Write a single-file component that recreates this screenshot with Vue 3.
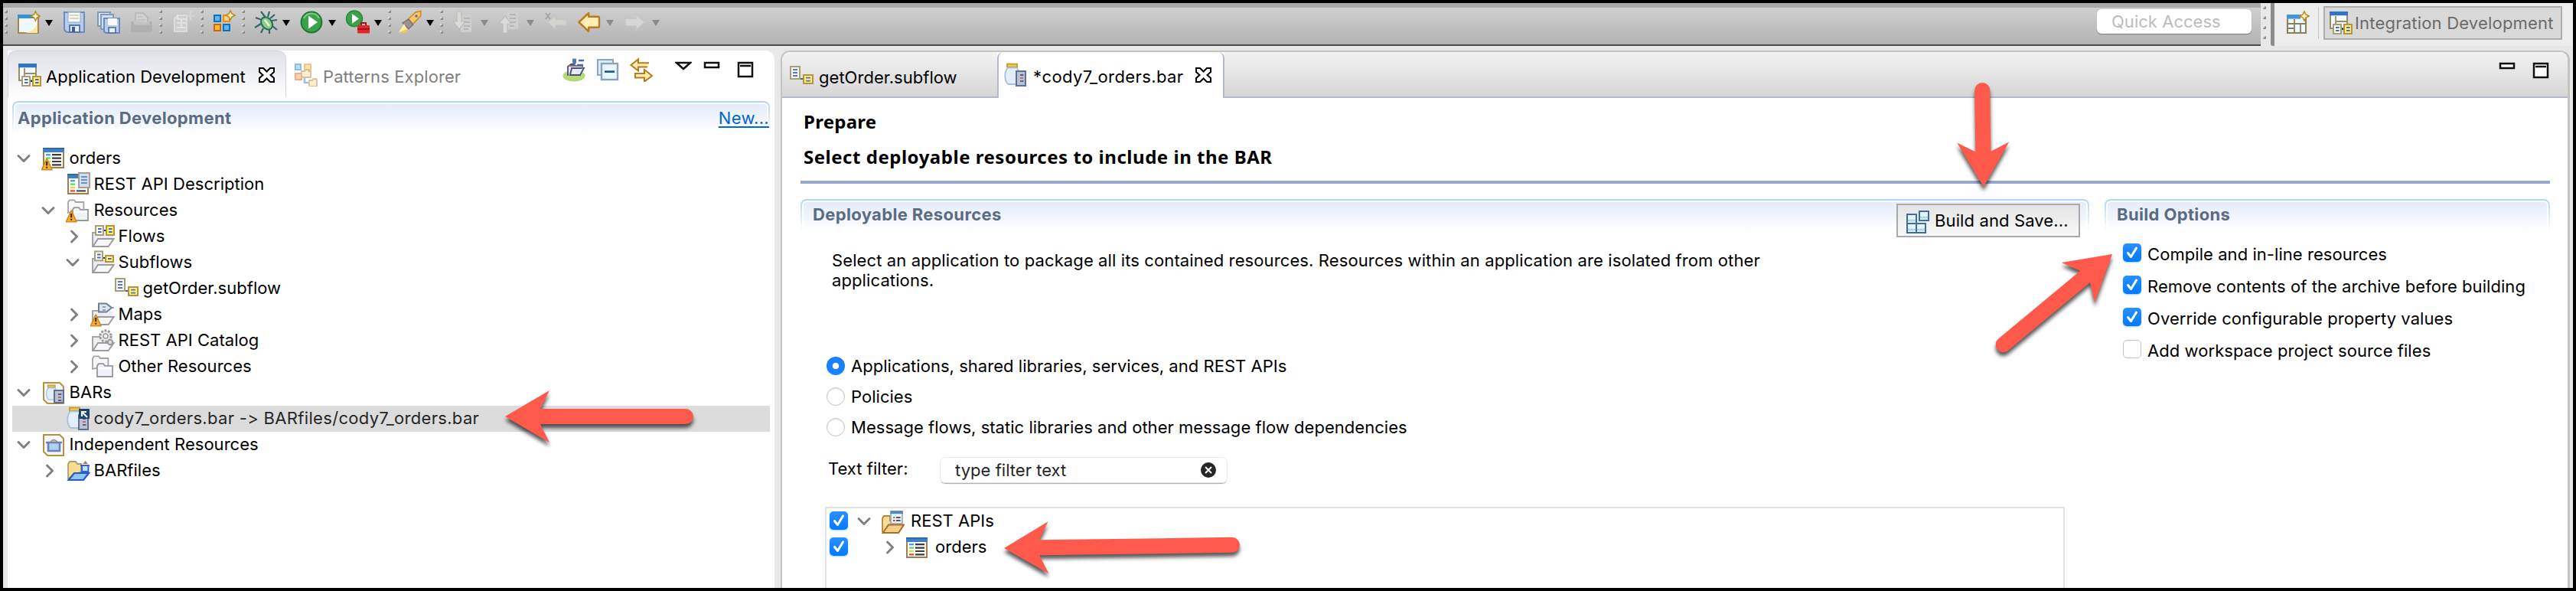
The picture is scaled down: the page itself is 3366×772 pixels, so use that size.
<script setup>
const star = (x, y) => `<path d="M${x} ${y - 3}l1 2 2 1-2 1-1 2-1-2-2-1 2-1z" fill="#fff3c8" stroke="#bb8a22" stroke-width=".8"/>`
const page = (x, y, h = 7) => `<rect x="${x + .5}" y="${y + .5}" width="6" height="${h + 1}" fill="#f4f6fc" stroke="#a99f76"/><path d="M${x + 2} ${y + 2.5}h3M${x + 2} ${y + 4.5}h3${h > 6 ? `M${x + 2} ${y + 6.5}h3` : ''}" stroke="#5b78b8" stroke-width=".9"/>`
const node = (x, y, h = 6) => `<rect x="${x + .5}" y="${y + .5}" width="6" height="${h - .5}" fill="#fdf17e" stroke="#b8923c"/><path d="M${x + 2} ${y + 2.3}h3M${x + 2} ${y + 4.3}h3" stroke="#5b6fa8" stroke-width=".9"/>`
const warn = '<path d="M3.600 8 7 15.400H.2z" fill="#f8ab2f" stroke="#d08a1e" stroke-width=".8" stroke-linejoin="round"/><path d="M3.600 10v2.600M3.600 13.400v1" stroke="#3a2500" stroke-width="1"/>'
const win = (c = '#3f7fc4') => `<rect x="1.500" y="1.500" width="13" height="12.500" fill="#fdfdfd" stroke="#a67c4b"/><rect x="1" y="1" width="14" height="3" fill="${c}"/><path d="M1 1.400h14" stroke="#2c62a5" stroke-width=".8"/>`
const lines = '<path d="M3 5.600h3" stroke="#2f8fff"/><path d="M3 7.800h3" stroke="#2fee3b"/><path d="M3 10h3" stroke="#ffd21f"/><path d="M3 12.200h3" stroke="#ff2a1a"/><path d="M7 5.600h6M7 7.800h6M7 10h6M7 12.200h6" stroke="#3b3b3b" stroke-width="1.100"/>'
const openFolder = '<path d="M1.500 14.500V5.500h6" fill="none" stroke="#a5a5a5"/><path d="M2 6h12.500v4L11 14H2z" fill="#eceef3"/><path d="M5 9.500h10.300L11.800 14.500H1.700z" fill="#f6f8fd" stroke="#9c9c9c"/>'
const folders = '<path d="M1.500 9.500V2.500l1-1.300h3l1 1.300h5.200v5z" fill="#f7f8fb" stroke="#a5a5a5" stroke-width=".9"/><path d="M4.500 14.500V7.300l1-1.200h3l1 1.300h5v7.100z" fill="#eff2f9" stroke="#999" stroke-width=".9"/><path d="M5 9h9" stroke="#fff" stroke-width=".9"/>'
const jar = () => '<rect x="2.500" y=".8" width="6.500" height="2" fill="#f2ce57" stroke="#c49a2a" stroke-width=".9"/><path d="M3.300 3.200h5.400c2.200 1.500 2.400 9 0 10.800H3.300C.4 12 .4 5 3.300 3.200z" fill="#e4eefa" stroke="#a8c0dd" stroke-width=".9"/>'
const server = (x, y, h = 9.5) => `<rect x="${x + .5}" y="${y + .5}" width="6" height="${h}" fill="#b7c2d6" stroke="#5e7191"/><path d="M${x + 3} ${y + 3}h2.200M${x + 3} ${y + 7}h2.200" stroke="#57617a"/><path d="M${x + 3} ${y + 5}h2" stroke="#c76a6a"/>`
const cardFrame = '<path d="M1.500 1.500h10.500l2.500 2.500v11H4l-2.500-2.500z" fill="#f4f7fd" stroke="#b39340"/>'
const flowPair = y => `<path d="M8.500 ${y + 3}h2" stroke="#1b3667"/><rect x="3.500" y="${y}" width="5" height="6" fill="#fff" stroke="#a99f76"/><path d="M5 ${y + 2}h2.300M5 ${y + 4}h2.300" stroke="#4c6ab0"/><rect x="10.500" y="${y}" width="5" height="6" fill="#fdf17e" stroke="#b8923c"/><path d="M12 ${y + 2}h2.300M12 ${y + 4}h2.300" stroke="#4c6ab0"/>`

const icons = {
  newWizard: `<rect x="1.500" y="3.500" width="13" height="11.500" fill="#eefaff" stroke="#a5884a"/><path d="M4 15c6 0 9-3 10-7v7z" fill="#fbe7a3"/><rect x="1" y="3" width="11" height="2.500" fill="#3e8fd6"/>${star(12.7, 4)}`,
  save: '<path d="M1.500 1.500h13v13H3l-1.500-1.500z" fill="#b9cdeb" stroke="#6c8cc0"/><rect x="4" y="1.500" width="8" height="6.500" fill="#f7f9f2" stroke="#9db3d3" stroke-width=".6"/><path d="M5 3.500h6M5 5.500h6" stroke="#c5cbb9" stroke-width=".8"/><rect x="5" y="10" width="6.500" height="4.500" fill="#e9effa" stroke="#4f6fb4" stroke-width=".9"/><rect x="6.500" y="11" width="2" height="3.500" fill="#3d5ca6"/>',
  saveAll: '<rect x="1.500" y="1.500" width="8" height="9" fill="#dfe8f2" stroke="#8199bd"/><rect x="3.500" y="3" width="8" height="9.500" fill="#d3dff0" stroke="#8199bd"/><path d="M5.500 5.500h10v9.500h-9l-1-1z" fill="#b9cdeb" stroke="#6c8cc0"/><rect x="8" y="5.500" width="6" height="4.500" fill="#f7f9f2"/><rect x="8.500" y="11.500" width="4.500" height="3.500" fill="#e9effa" stroke="#4f6fb4" stroke-width=".8"/>',
  print: '<path d="M4 7V2h5l3 3v3" fill="#d0d0d0" stroke="#bababa"/><path d="M5.500 4.500h3M5.500 6.500h5" stroke="#bdbdbd" stroke-width=".8"/><path d="M2 7.500v3h12v-3" fill="none" stroke="#adadad" stroke-width="1.300"/><rect x="1" y="10" width="14" height="4.500" fill="#b0b0b0"/>',
  newBar: '<path d="M2.500 14V5.500l2-2h6V14z" fill="#cfcfcf" stroke="#dcdcdc"/><path d="M4.500 3V6h6M4 8.500h6M4 11.500h6M7 6.500v5" fill="none" stroke="#e2e2e2"/><path d="M13 .8v6M10 3.800h6" stroke="#d6d6d6" stroke-width="1.200"/>',
  patternNew: `<rect x="1.500" y="3.500" width="4" height="4" fill="#5cb6f2" stroke="#0f6fb8"/><rect x="1.500" y="9.500" width="4" height="4" fill="#ffc423" stroke="#d8600f"/><rect x="7.500" y="9.500" width="4" height="4" fill="#5cb6f2" stroke="#0f6fb8"/><rect x="7.500" y="3.500" width="4" height="4" fill="#ffd27a" stroke="#ef8a1a"/>${star(12, 3.5)}`,
  bug: '<g stroke="#2f6a68" stroke-width="1.100" fill="none"><path d="M8 5 5 1M9.500 4.500 10.500 1M5.500 6.500 1.500 5M5 9 1 11.500M6.500 12 5 15M10.500 13v2.500M12.500 10.500l3 2.500M12 7l3.500-.5M11 5.500 14 3"/></g><ellipse cx="8.800" cy="8.700" rx="3.300" ry="4.400" transform="rotate(-40 8.800 8.700)" fill="#8fc98b" stroke="#2c6a5d" stroke-width="1"/><path d="M7.500 6.500l3 4" stroke="#e4f5cd" stroke-width="1.300"/>',
  run: '<circle cx="8" cy="8" r="6.700" fill="#3aa24a" stroke="#1d7a35"/><path d="M3 5.500a5.500 5.500 0 0 1 10 0" fill="none" stroke="#79c878" stroke-width="1.200"/><path d="M6 3.800 12 8l-6 4.200z" fill="#fff"/>',
  runExt: '<circle cx="6" cy="5.700" r="5.200" fill="#3aa24a" stroke="#2a8a40" stroke-width=".8"/><path d="M4.500 2.500 9 5.700 4.500 8.900z" fill="#fff"/><rect x="8" y="10" width="8" height="5.300" rx=".6" fill="#e3262c"/><path d="M10.500 10V8.500h3V10M8 12.500h8" fill="none" stroke="#a90f17"/>',
  rocket: '<path d="M5 8 12 1.500l3.500-.8L15.300 4 8.500 11z" fill="#f6c765" stroke="#d9861c" stroke-width=".8"/><path d="M3.500 8.500l4-2.500 3 3.500-3 3z" fill="#9c9191" stroke="#786c6c" stroke-width=".6"/><path d="M4.500 9 1 14.800l5.500-2.300z" fill="#fff09a"/><path d="M1 15h4.500l2-2.500" fill="#f7c741"/><circle cx="12.500" cy="4" r=".9" fill="#4c7fa4"/>',
  nextNote: '<rect x="6" y="3" width="7" height="11.500" fill="#cfcfcf"/><path d="M8 5.500h4M8 8h4M8 10.500h4M8 12.500h3" stroke="#b5b5b5" stroke-width=".9"/><path d="M3.500 1h3v6.500H9L5 12.500 1 7.500h2.500z" fill="#dadad7" stroke="#bcbcbc" stroke-width=".6"/>',
  prevNote: '<rect x="6" y="1" width="7.500" height="11.500" fill="#cfcfcf"/><path d="M8 3h4M8 5.500h4M8 8h4M8 10.500h3" stroke="#b5b5b5" stroke-width=".9"/><path d="M3.500 15h3V9H9L5 4 1 9h2.500z" fill="#dadad7" stroke="#bcbcbc" stroke-width=".6"/>',
  lastEdit: '<path d="M1.500 2l3 4M4.500 2l-3 4" stroke="#a5a5ad"/><path d="M15 6.300H8V3.500L3 8l5 4.800V10h7z" fill="#d3d3d0" stroke="#c2c2c2" stroke-width=".5"/>',
  back: '<path d="M14.500 5.200q0-.8-.8-.8H7.600V2L1.200 8l6.400 6v-2.600h6.100q.8 0 .8-.8z" fill="#ffefb5" stroke="#bd7a1c" stroke-width="1.200" stroke-linejoin="round"/>',
  forward: '<path d="M1.500 5.500h7V2.700L14.300 8l-5.800 5.300v-2.800h-7z" fill="#d6d6d6" stroke="#c5c5c5" stroke-width=".7"/>',
  appdev: '<rect x="1.500" y="1.500" width="11" height="10.500" fill="#f2f9ff" stroke="#9b8d5e"/><rect x="1" y="1" width="12" height="2.600" fill="#2f74c6"/><path d="M5 4v8M5 7.500h7" stroke="#9b8d5e" stroke-width=".9"/>' + flowPair(9.5),
  patterns: '<g opacity=".6"><rect x="1.500" y="1.500" width="3.500" height="3.500" fill="#8fd0f8" stroke="#3f97d6"/><rect x="7.500" y="1.500" width="4" height="3.500" fill="#ffd27a" stroke="#ef9a3a"/><rect x="1.500" y="7.500" width="4" height="4" fill="#ffb27a" stroke="#e07a3f"/><path d="M7.500 10v3.500h3" fill="none" stroke="#5a9bd0" stroke-width="1.300"/><path d="M5.500 6h2l.7-1H10v1h1.500v4H5.500zM10.500 12h2l.7-1H15l.5 1v4h-5z" fill="#fbe3b0" stroke="#c0965a" stroke-width=".9"/></g>',
  mapper: '<ellipse cx="8" cy="12" rx="7.300" ry="3.800" fill="#b5dc72"/><path d="M4 12V6l2-1.500h2M5.500 11.500h6.500L14.500 7H6.500z" fill="#e6eaf7" stroke="#4d4f7c" stroke-width=".9"/><path d="M4.500 5.500h9v2" fill="none" stroke="#8d6f7a" stroke-width=".9"/><rect x="7" y=".8" width="2.500" height="3" fill="#5579bd"/><path d="M11 2h3.500M8.300 3.500v2M10 5h4" stroke="#4a6da8" stroke-width="1.200"/>',
  collapse: '<rect x="1.500" y="1.500" width="10" height="10" fill="#d8effa" stroke="#8fa6c0"/><rect x="4" y="4" width="10.500" height="10.500" fill="#eaf6fd" stroke="#8ba2bd" stroke-width="1.200"/><path d="M6 9.300h6.500" stroke="#17528f" stroke-width="1.300"/>',
  link: '<path d="M13 3.600H6V1.200L1.200 5 6 8.700V6.300h6" fill="#ffefb5" stroke="#bd7a1c" stroke-width="1"/><path d="M4 10.500h6V8l5 4-5 3.800v-2.600H4z" fill="#ffefb5" stroke="#bd7a1c" stroke-width="1"/>',
  perspective: `<rect x="1.500" y="3.500" width="12" height="11.500" fill="#eaf8ff" stroke="#8d7f55"/><path d="M6 6v9M1.500 9h12M10 9v6M6 12H1.500" stroke="#8d7f55" stroke-width=".9"/><rect x="1" y="3" width="9" height="2.800" fill="#4a93d8"/>${star(12.5, 4)}`,
  restApp: win() + lines,
  restAppWarn: win() + lines + warn,
  restDesc: win() + '<path d="M3 5.600h3" stroke="#2f8fff"/><path d="M3 7.800h3" stroke="#2fee3b"/><path d="M3 10h3" stroke="#ffd21f"/><path d="M3 12.200h3" stroke="#ff2a1a"/><path d="M7 12.200h6" stroke="#3b3b3b"/><rect x="8.500" y=".5" width="7" height="9.500" fill="#cfdff5" stroke="#a99f8a"/><path d="M10 3h4M10 5h4M10 7h4" stroke="#6f8dbd" stroke-width=".9"/>',
  resources: folders + warn,
  otherRes: folders,
  flows: openFolder + flowPair(1),
  subflows: openFolder + '<path d="M8 5h2" stroke="#1b3667"/><rect x="3" y=".7" width="5" height="6" fill="#fff" stroke="#a99f76"/><path d="M4.500 2.700h2.300M4.500 4.700h2.300" stroke="#4c6ab0"/><rect x="10" y="3.500" width="5" height="4" fill="#fdf17e" stroke="#b8923c"/><path d="M11.500 5.500h2.300" stroke="#4c6ab0"/>',
  subflow: page(0, 1) + '<path d="M7 9.500h2" stroke="#1b3667" stroke-width=".8"/>' + node(8.5, 6.5),
  maps: openFolder + '<path d="M5.500 .8h5l3.500 2.700-3.500 2.800h-5z" fill="#dfe5ef" stroke="#6f7f99"/><path d="M8 3h2M8 5h2M14 3.500h1.500" stroke="#7c8ba5" stroke-width=".8"/>' + warn,
  catalog: openFolder + '<circle cx="10" cy="5" r="3.600" fill="#e9e9ec" stroke="#9a9a9a" stroke-width="1.500" stroke-dasharray="1.400 .9"/><circle cx="10" cy="5" r="1.500" fill="#fff" stroke="#9a9a9a" stroke-width=".8"/><circle cx="13" cy="9" r="1.600" fill="#ddd" stroke="#9a9a9a"/>',
  bars: cardFrame + '<g transform="translate(2.500 2.500) scale(.72)">' + jar() + '</g>' + server(8, 6, 8),
  bar: jar() + server(8, 5),
  barLink: jar() + server(8, 5) + '<rect x="8.500" y="1.500" width="7" height="6.500" fill="#1f4470"/><path d="M10.500 6.500V3.500h3M10.500 3.500 14 7" stroke="#fff" stroke-width="1.100" fill="none"/>',
  independent: cardFrame + '<path d="M3 6.500h10.500M4.500 7v5h7.500V7" fill="#a9d3ee" stroke="#6f80bb" stroke-width="1.300"/><path d="M6 6q2-2.500 4.500 0" fill="#e6b98c" stroke="#a88" stroke-width=".7"/>',
  barFolder: '<path d="M1.500 13V3.500l1-1.500h4l1 1.500h2.500v5z" fill="#fbdc8d" stroke="#a9a07a" stroke-width=".9"/><path d="M5.500 9.500H15L11.500 14H1.800z" fill="#8cc6f6" stroke="#2756c6" stroke-width="1.100"/><path d="M9.500 4.500h6M10.500 5v3.500h4.200V5" fill="#bfe2ff" stroke="#2f62d8"/><path d="M11 3.500h3.500l-1.700-2z" fill="#c96c62"/>',
  restFolder: '<path d="M1.500 14.500V5.500l1-1.500h4v3h6.500v3" fill="#f7dc9a" stroke="#b98334" stroke-width=".9"/><rect x="7" y="1" width="7.500" height="8" fill="#eef3fb" stroke="#93a7c8" stroke-width=".8"/><rect x="6.700" y=".6" width="8.200" height="2" fill="#5588c8"/><path d="M8.500 5h1.300" stroke="#2fcf3b"/><path d="M8.500 7h1.300" stroke="#f33"/><path d="M10.500 5h2.800M10.500 7h2.800" stroke="#555"/><path d="M5.500 9.800h10L12 15H1.800z" fill="#f6cf86" stroke="#a9702c" stroke-width="1"/>',
  build: '<path d="M1.500 3.500h6v6h-6zM1.500 9.500h6v6h-6zM7.500 9.500h6v6h-6zM9.500 1.500h6v6h-6z" fill="#e6f3fa"/><path d="M2 7.500h5M2 13.500h5M8 13.500h5M10 5.500h5" stroke="#a9d6e8" stroke-width="1.300"/><path d="M1.500 3.500h6v6h-6zM1.500 9.500h6v6h-6zM7.500 9.500h6v6h-6zM9.500 1.500h6v6h-6z" fill="none" stroke="#3a6ea5"/>',
}

const toolbar = ['grip', 'newWizard', 'drop', 'save', 'saveAll', 'print', 'grip', 'newBar', 'grip', 'patternNew', 'grip',
  'bug', 'drop', 'run', 'drop', 'runExt', 'drop', 'grip', 'rocket', 'drop', 'grip', 'nextNote', 'dropOff', 'prevNote', 'dropOff',
  'lastEdit', 'back', 'dropOff', 'forward', 'dropOff']
const kind = n => n.startsWith('drop') ? 'drop' : n === 'grip' ? 'grip' : 'icon'

const tree = [
  { level: 0, open: true, icon: 'restAppWarn', label: 'orders' },
  { level: 1, icon: 'restDesc', label: 'REST API Description' },
  { level: 1, open: true, icon: 'resources', label: 'Resources' },
  { level: 2, open: false, icon: 'flows', label: 'Flows' },
  { level: 2, open: true, icon: 'subflows', label: 'Subflows' },
  { level: 3, icon: 'subflow', label: 'getOrder.subflow' },
  { level: 2, open: false, icon: 'maps', label: 'Maps' },
  { level: 2, open: false, icon: 'catalog', label: 'REST API Catalog' },
  { level: 2, open: false, icon: 'otherRes', label: 'Other Resources' },
  { level: 0, open: true, icon: 'bars', label: 'BARs' },
  { level: 1, icon: 'barLink', label: 'cody7_orders.bar -> BARfiles/cody7_orders.bar', selected: true },
  { level: 0, open: true, icon: 'independent', label: 'Independent Resources' },
  { level: 1, open: false, icon: 'barFolder', label: 'BARfiles' },
]

const scopes = [
  { label: 'Applications, shared libraries, services, and REST APIs', on: true },
  { label: 'Policies', on: false },
  { label: 'Message flows, static libraries and other message flow dependencies', on: false },
]
const options = [
  { label: 'Compile and in-line resources', on: true },
  { label: 'Remove contents of the archive before building', on: true },
  { label: 'Override configurable property values', on: true },
  { label: 'Add workspace project source files', on: false },
]
const resources = [
  { level: 0, open: true, icon: 'restFolder', label: 'REST APIs' },
  { level: 1, open: false, icon: 'restApp', label: 'orders' },
]

// Callout arrows: tip position, rotation in degrees and total length
const arrows = [
  { x: 660, y: 544, a: 0, l: 246 },
  { x: 1312, y: 716, a: -0.8, l: 308 },
  { x: 2592, y: 244, a: -90.8, l: 136 },
  { x: 2760, y: 332, a: 140.3, l: 195 },
]
const arrowPath = l => `M0 0L58-34L46-10H${l - 10}a10 10 0 0 1 0 20H46L58 34z`
const tick = 'M6.500 12.500l4 5L17.500 6'
</script>

<template>
  <div class="window">
    <div class="top">
      <div class="toolbar">
        <template v-for="(n, i) in toolbar" :key="i">
          <span v-if="kind(n) === 'grip'" class="grip"><i v-for="k in 4" :key="k"></i></span>
          <span v-else-if="kind(n) === 'drop'" class="drop" :class="{ off: n === 'dropOff' }"></span>
          <svg v-else class="icon" viewBox="0 0 16 16" v-html="icons[n]"></svg>
        </template>
        <div class="quick"><span class="t">Quick Access</span></div>
      </div>
      <span class="grip tall"><i v-for="k in 4" :key="k"></i></span>
      <div class="perspectives">
        <svg class="icon" viewBox="0 0 16 16" v-html="icons.perspective"></svg>
        <div class="persp">
          <svg class="icon" viewBox="0 0 16 16" v-html="icons.appdev"></svg>
          <span class="t">Integration Development</span>
        </div>
      </div>
    </div>

    <div class="work">
      <aside class="view">
        <div class="tabs">
          <div class="tab active">
            <svg class="icon" viewBox="0 0 16 16" v-html="icons.appdev"></svg>
            <span class="t">Application Development</span>
            <svg class="close" viewBox="0 0 21 20"><path d="M1 1h5l4.500 4.500L15 1h5v5l-4.500 4L20 14v5h-5l-4.500-4.500L6 19H1v-5l4.500-4L1 6z" /></svg>
          </div>
          <div class="tab dim">
            <svg class="icon" viewBox="0 0 16 16" v-html="icons.patterns"></svg>
            <span class="t">Patterns Explorer</span>
          </div>
          <div class="view-tools">
            <svg class="icon" viewBox="0 0 16 16" v-html="icons.mapper"></svg>
            <svg class="icon" viewBox="0 0 16 16" v-html="icons.collapse"></svg>
            <svg class="icon" viewBox="0 0 16 16" v-html="icons.link"></svg>
            <svg class="ctl menu" viewBox="0 0 22 22"><path d="M2 2h18l-9 8z" /></svg>
            <svg class="ctl" viewBox="0 0 22 22"><path d="M2 2h18v6H2z" /></svg>
            <svg class="ctl max" viewBox="0 0 22 22"><path d="M2 2h18v18H2zM4 6h14" /></svg>
          </div>
        </div>
        <div class="section"><div class="section-in"><b class="t">Application Development</b><a class="t">New...</a></div></div>
        <div class="tree">
          <div v-for="(r, i) in tree" :key="i" class="row" :class="['lv' + r.level, { selected: r.selected }]">
            <span class="twist">
              <svg v-if="r.open !== undefined" :class="{ open: r.open }" viewBox="0 0 20 20"><path d="M6.500 3l7 7-7 7" /></svg>
            </span>
            <svg class="icon" viewBox="0 0 16 16" v-html="icons[r.icon]"></svg>
            <span class="t">{{ r.label }}</span>
          </div>
        </div>
      </aside>

      <main class="editor">
        <div class="etabs">
          <div class="etab first">
            <svg class="icon" viewBox="0 0 16 16" v-html="icons.subflow"></svg>
            <span class="t">getOrder.subflow</span>
          </div>
          <div class="etab active">
            <svg class="icon" viewBox="0 0 16 16" v-html="icons.bar"></svg>
            <span class="t">*cody7_orders.bar</span>
            <svg class="close" viewBox="0 0 21 20"><path d="M1 1h5l4.500 4.500L15 1h5v5l-4.500 4L20 14v5h-5l-4.500-4.500L6 19H1v-5l4.500-4L1 6z" /></svg>
          </div>
          <div class="etab rest">
            <svg class="ctl" viewBox="0 0 22 22"><path d="M2 2h18v6H2z" /></svg>
            <svg class="ctl max" viewBox="0 0 22 22"><path d="M2 2h18v18H2zM4 6h14" /></svg>
          </div>
        </div>
        <div class="page">
          <h1><span class="t">Prepare</span></h1>
          <h2><span class="t">Select deployable resources to include in the BAR</span></h2>
          <div class="rule"></div>
          <div class="columns">
            <section class="deploy">
              <div class="section">
                <div class="section-in"><b class="t">Deployable Resources</b></div>
                <button class="build">
                  <svg class="icon" viewBox="0 0 16 16" v-html="icons.build"></svg>
                  <span class="t">Build and Save...</span>
                </button>
              </div>
              <p class="desc"><span class="t">Select an application to package all its contained resources. Resources within an application are isolated from other</span><br><span class="t">applications.</span></p>
              <div class="scopes">
                <label v-for="s in scopes" :key="s.label"><span class="radio" :class="{ on: s.on }"></span><span class="t">{{ s.label }}</span></label>
              </div>
              <div class="filter">
                <span class="flabel t">Text filter:</span>
                <div class="field">
                  <span class="t">type filter text</span>
                  <svg viewBox="0 0 22 22"><circle cx="11" cy="11" r="11" /><path d="M7 7l8 8M15 7l-8 8" /></svg>
                </div>
              </div>
              <div class="table">
                <div v-for="r in resources" :key="r.label" class="trow" :class="'lv' + r.level">
                  <span class="check on"><svg viewBox="0 0 24 24"><path :d="tick" /></svg></span>
                  <span class="twist"><svg :class="{ open: r.open }" viewBox="0 0 20 20"><path d="M6.500 3l7 7-7 7" /></svg></span>
                  <svg class="icon" viewBox="0 0 16 16" v-html="icons[r.icon]"></svg>
                  <span class="t">{{ r.label }}</span>
                </div>
              </div>
            </section>
            <section class="options">
              <div class="section"><div class="section-in"><b class="t">Build Options</b></div></div>
              <label v-for="o in options" :key="o.label">
                <span class="check" :class="{ on: o.on }"><svg v-if="o.on" viewBox="0 0 24 24"><path :d="tick" /></svg></span>
                <span class="t">{{ o.label }}</span>
              </label>
            </section>
          </div>
        </div>
      </main>
    </div>

    <svg class="callouts" viewBox="0 0 3366 772">
      <g v-for="(p, i) in arrows" :key="i" class="callout">
        <path :d="arrowPath(p.l)" :transform="`translate(${p.x} ${p.y}) rotate(${p.a})`" />
      </g>
    </svg>
  </div>
</template>

<style>
body { margin: 0; background: #000; }
</style>

<style scoped>
.window {
  position: relative;
  box-sizing: border-box;
  width: 3366px;
  height: 772px;
  border: 4px solid #000;
  background: #e8e8e8;
  display: flex;
  flex-direction: column;
  overflow: hidden;
  font: 22px/32px Inter, "Liberation Sans", sans-serif;
  font-feature-settings: "calt" 0;
  letter-spacing: .03px;
  color: #000;
}
.t { white-space: pre; }
.icon { width: 32px; height: 32px; flex: none; display: block; }

.top { display: flex; height: 62px; flex: none; }
.toolbar {
  box-sizing: border-box;
  width: 2950px;
  height: 56px;
  padding: 6px 12px 0 2px;
  display: flex;
  align-items: flex-start;
  background: linear-gradient(#a9a9a9 6px, #cfcfcf 6px, #b3b3b3 54px, #4b4b4b 54px);
}
.toolbar .icon { margin-top: 3px; }
.grip { width: 4px; padding-top: 3px; flex: none; display: flex; flex-direction: column; gap: 5px; }
.grip i { width: 4px; height: 4px; border-radius: 1px; background: linear-gradient(135deg, #e2e2e2 25%, #8c8778 60%); }
.toolbar .grip { gap: 5px; height: 31px; justify-content: space-between; }
.grip + .icon { margin-left: 11px; }
.drop + .grip + .icon:nth-child(19) { margin-left: 8px; }
.icon + .icon { margin-left: 12px; }
.icon + .drop { margin-left: 6px; }
.drop + .icon { margin-left: 12px; }
.icon + .grip { margin-left: 7px; }
.drop + .grip { margin-left: 8px; }
.drop { width: 10px; height: 8px; margin-top: 16px; background: #000; clip-path: polygon(0 0, 100% 0, 50% 100%); }
.drop.off { background: #8a8a8a; }
.quick {
  margin: 2px 0 0 auto;
  box-sizing: border-box;
  width: 202px;
  height: 32px;
  padding-left: 19px;
  border-radius: 6px;
  background: #fff;
  box-shadow: 0 1px 1px rgba(0, 0, 0, .35);
  color: #bcbcbc;
  line-height: 32px;
}
.grip.tall { padding: 4px 6px 0 3px; gap: 9px; width: 4px; }
.perspectives {
  height: 56px;
  flex: 1;
  display: flex;
  align-items: flex-start;
  border-left: 5px solid #8d8d8d;
  border-bottom-left-radius: 3px;
  background: #ededed;
  padding-left: 14px;
}
.perspectives > .icon { margin-top: 9px; }
.persp {
  box-sizing: border-box;
  width: 312px;
  height: 44px;
  margin: 4px 0 0 18px;
  border: 2px solid #adadad;
  background: #d9d9d9;
  box-shadow: -7px 0 0 -1px #ededed, -8px 0 0 -1px #c8c8c8;
  display: flex;
  align-items: flex-start;
  padding: 3px 0 0 4px;
  color: #6b6b6b;
  letter-spacing: .2px;
}
.persp .t { margin-left: 3px; line-height: 34px; }

.work { flex: 1; display: flex; min-height: 0; }
.view { width: 1002px; margin-left: 6px; background: #fff; border-top-right-radius: 12px; }
.tabs { height: 61px; display: flex; }
.tab { display: flex; align-items: flex-start; padding-top: 14px; box-sizing: border-box; }
.tab .t { margin-top: 3px; }
.tab.active {
  width: 364px;
  padding-left: 11px;
  border: solid #d3d6e2;
  border-width: 1px 1px 0 1px;
  border-radius: 10px 10px 0 0;
  background: linear-gradient(#dfe1e8, #fff);
}
.tab.active .t { margin-left: 6px; }
.tab.dim { padding-left: 9px; padding-top: 15px; color: #808080; }
.tab.dim .t { margin-left: 7px; margin-top: 3px; letter-spacing: .1px; }
.close { width: 21px; height: 20px; margin: 7px 0 0 auto; padding-right: 14px; fill: #fff; stroke: #000; stroke-width: 2; }
.view-tools { margin-left: auto; display: flex; padding: 9px 27px 0 0; }
.view-tools .icon + .icon { margin-left: 12px; }
.ctl { width: 22px; height: 22px; margin: 5px 0 0 15px; fill: #fff; stroke: #111; stroke-width: 2.5; }
.ctl.max { margin-left: 22px; }
.ctl.menu { margin-left: 28px; }

.section {
  position: relative;
  height: 42px;
  box-sizing: border-box;
  padding: 2px 2px 0;
  border-radius: 8px 8px 0 0;
  background: linear-gradient(#b2d2f6, #fff);
}
.section-in {
  height: 38px;
  border: 2px solid #fff;
  border-bottom: 0;
  border-radius: 6px 6px 0 0;
  background: linear-gradient(#e3edfa, #f1f5fd 50%, #fff);
  display: flex;
  justify-content: space-between;
  color: #5a6c83;
}
.section-in b { letter-spacing: .36px; }
.view .section { margin: 5px 6px 0; }
.view .section-in { padding-left: 3px; line-height: 36px; }
.section-in a { margin-right: -3px; color: #0064dc; letter-spacing: .3px; text-decoration: underline; text-decoration-thickness: 2px; text-underline-offset: 3px; }

.tree { margin: 16px 6px 0; }
.row { height: 34px; display: flex; align-items: flex-start; }
.row .icon { margin-top: 1px; }
.row .t { margin-left: 4.5px; }
.row.selected { background: #dcdcdc; color: #262626; letter-spacing: .32px; }
.twist { width: 20px; height: 32px; margin: 0 13px 0 5px; flex: none; }
.twist svg { width: 20px; height: 20px; margin: 7px 0 0 2px; display: block; fill: none; stroke: #808080; stroke-width: 3; stroke-linecap: round; stroke-linejoin: round; }
.twist svg.open { margin-left: 0; transform: rotate(90deg); }
.row.lv1 { padding-left: 32px; }
.row.lv2 { padding-left: 64px; }
.row.lv3 { padding-left: 96px; }

.editor {
  width: 2338px;
  margin-left: 8px;
  box-sizing: border-box;
  border: solid #c3c3c0;
  border-width: 2px 3px 0 2px;
  border-radius: 12px 12px 0 0;
  background: #fff;
  overflow: hidden;
}
.etabs { height: 60px; display: flex; }
.etab {
  box-sizing: border-box;
  height: 60px;
  display: flex;
  align-items: flex-start;
  border-bottom: 2px solid #b4bacd;
  background: linear-gradient(#f3f3f3, #d6d6d6);
}
.etab.first { width: 281px; padding: 16px 0 0 10px; }
.etab.first .t { margin: 1px 0 0 6px; }
.etab.active {
  width: 297px;
  padding: 14px 1px 0 6px;
  background: #fff;
  border: 2px solid #b4bacd;
  border-width: 0 2px;
  border-radius: 8px 8px 0 0;
}
.etab.active .t { margin: 2px 0 0 7px; letter-spacing: .4px; }
.etab.active .close { margin-top: 6px; }
.etab.rest { flex: 1; justify-content: flex-end; padding: 8px 24px 0 0; }

.page { padding: 18px 0 0 24px; width: 2286px; }
h1, h2 { margin: 0; font: bold 24px/26px "Noto Sans", sans-serif; padding-left: 4px; letter-spacing: .25px; }
h2 { margin-top: 20px; letter-spacing: .52px; }
.rule { height: 4px; margin: 18px 0 20px; background: #96a9cc; }
.columns { display: grid; grid-template-columns: 1684px 582px; gap: 20px; }
.columns .section-in { padding-left: 12px; }
.build {
  position: absolute;
  right: 12px;
  top: 6px;
  box-sizing: border-box;
  width: 240px;
  height: 44px;
  padding: 5px 0 0 9px;
  border: 2px solid #a9a9a9;
  background: linear-gradient(#e4e4e4, #f8f8f8);
  display: flex;
  align-items: flex-start;
  font: inherit;
  letter-spacing: .12px;
  color: #000;
}
.build .t { margin-left: 7px; line-height: 30px; }
.desc { margin: 25px 0 0 41px; line-height: 26px; letter-spacing: .11px; }
.scopes { margin: 79px 0 0 34px; }
.scopes label { height: 40px; display: flex; align-items: center; }
.radio {
  box-sizing: border-box;
  width: 24px;
  height: 24px;
  margin-right: 8px;
  border-radius: 50%;
  border: 1px solid #c4c4c4;
  background: #fff;
  box-shadow: inset 0 1px 2px rgba(0, 0, 0, .12);
}
.radio.on { border: 0; background: radial-gradient(circle, #fff 3.8px, #1a82ff 4.6px); }
.filter { margin: 19px 0 0 36px; height: 34px; display: flex; }
.flabel { width: 146px; line-height: 30px; }
.field {
  box-sizing: border-box;
  width: 376px;
  height: 34px;
  border-radius: 7px;
  border: 1px solid #e9e9e9;
  box-shadow: 0 2px 1px -1px rgba(0, 0, 0, .35);
  padding: 0 13px 0 19px;
  display: flex;
  justify-content: space-between;
  align-items: center;
  color: #262626;
}
.field svg { width: 22px; height: 22px; stroke: #fff; stroke-width: 2; fill: #262626; }
.table {
  box-sizing: border-box;
  width: 1620px;
  height: 120px;
  margin: 31px 0 0 32px;
  border: 2px solid #e3e3e3;
}
.trow { height: 34px; display: flex; align-items: flex-start; }
.trow .check { margin: 4px 0 0 4px; }
.trow .twist { margin: 0 11px 0 11px; }
.trow.lv1 .twist { margin-left: 43px; margin-right: 11px; }
.trow .icon { margin-top: 2px; }
.trow .t { margin-left: 8px; }
.check {
  box-sizing: border-box;
  width: 24px;
  height: 24px;
  flex: none;
  border: 1px solid #c4c4c4;
  border-radius: 5px;
  background: #fff;
}
.check.on { border: 0; background: linear-gradient(#2b90ff, #007aff); box-shadow: 0 1px 2px rgba(0, 122, 255, .4); }
.check svg { display: block; width: 24px; height: 24px; fill: none; stroke: #fff; stroke-width: 3; stroke-linecap: round; stroke-linejoin: round; }
.options label { display: flex; height: 42px; padding-left: 24px; align-items: flex-start; letter-spacing: .06px; }
.options .section { margin-bottom: 14px; }
.options .check { margin: 2px 8px 0 0; }

.callouts { position: absolute; left: -4px; top: -4px; width: 3366px; height: 772px; }
.callout { fill: #ff594b; filter: drop-shadow(0 5px 2.5px rgba(0, 0, 0, .65)); }
</style>
